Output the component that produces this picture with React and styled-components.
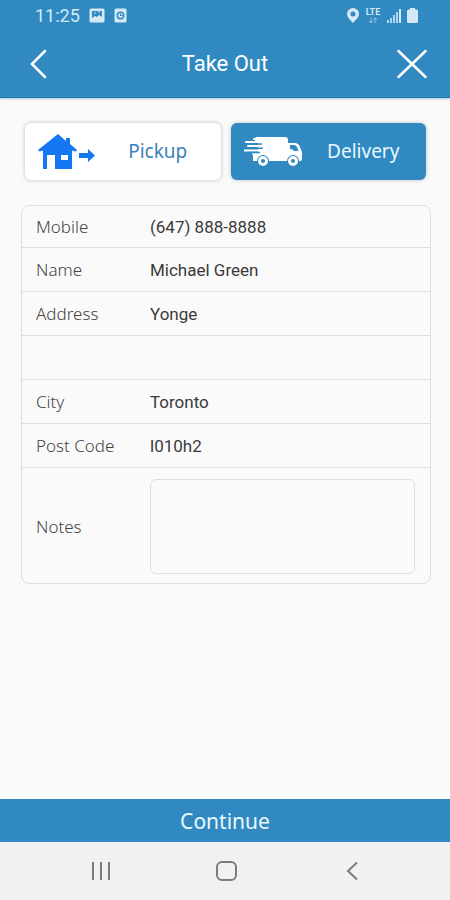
import React from "react";
import styled, { createGlobalStyle } from "styled-components";

const blue = "#308ac1";
const line = "#dedede";
const labelFont = '"Noto Sans", "Open Sans", sans-serif';
const valueFont = 'Roboto, "Liberation Sans", sans-serif';

const GlobalStyle = createGlobalStyle`
  *, *::before, *::after { box-sizing: border-box; }
  body { margin: 0; background: #fafafa; font-family: ${valueFont}; }
  button, input, textarea { font: inherit; color: inherit; margin: 0; }
  svg { display: block; flex: none; }
`;

const Screen = styled.div`
  min-height: 100vh;
  display: flex;
  flex-direction: column;
  background: #fafafa;
`;

const Header = styled.header`
  background: ${blue};
  color: #fff;
  border-bottom: 1px solid #2478aa;
  box-shadow: 0 1px 2px rgba(48, 138, 193, 0.45);
`;

const StatusBar = styled.div`
  height: 31px;
  padding: 0 32px 0 35px;
  display: flex;
  align-items: center;
  justify-content: space-between;
  color: #d3e9f6;
`;

const StatusGroup = styled.div`
  display: flex;
  align-items: center;
  gap: ${(p) => p.$gap}px;
`;

const Clock = styled.time`
  font-size: 18px;
  line-height: 24px;
`;

const TitleBar = styled.div`
  height: 66px;
  padding: 0 20px;
  display: grid;
  grid-template-columns: 36px 1fr 36px;
  align-items: center;
`;

const Title = styled.h1`
  margin: 0;
  text-align: center;
  font-size: 22px;
  line-height: 28px;
  font-weight: 400;
`;

const IconButton = styled.button`
  width: 36px;
  height: 36px;
  padding: 0;
  border: 0;
  background: none;
  display: grid;
  place-items: center;
  cursor: pointer;
`;

const Content = styled.main`
  flex: 1;
  padding: 25px 19px 24px 21px;
`;

const ModeSwitch = styled.div`
  display: grid;
  grid-template-columns: 1fr 1fr;
  gap: 10px;
  padding: 0 5px 0 4px;
`;

const ModeButton = styled.button`
  height: 57px;
  padding: 0 13px;
  border: 0;
  border-radius: 6px;
  display: grid;
  grid-template-columns: 58px 1fr;
  align-items: center;
  text-align: center;
  font-family: ${labelFont};
  font-size: 19px;
  line-height: 24px;
  cursor: pointer;
  background: ${(p) => (p.$active ? blue : "#fff")};
  color: ${(p) => (p.$active ? "#eaf7fd" : "#3b82bd")};
  box-shadow: 0 0 4px rgba(0, 0, 0, 0.24);
`;

const ModeLabel = styled.span`
  padding: 0 0 2px 12px;
`;

const Card = styled.form`
  margin-top: 25px;
  border: 1px solid ${line};
  border-radius: 8px;
`;

const Row = styled.div`
  min-height: 44px;
  display: grid;
  grid-template-columns: 114px 1fr;
  align-items: center;
  padding: 0 15px 0 14px;
  border-bottom: 1px solid ${line};

  &:first-child { min-height: 42px; }
  &:last-child { border-bottom: 0; padding-top: 11px; padding-bottom: 9px; }
`;

const Label = styled.label`
  font-family: ${labelFont};
  font-size: 17px;
  line-height: 24px;
  font-weight: 300;
  color: #444;
`;

const Field = styled.input`
  width: 100%;
  height: 32px;
  padding: 0;
  border: 0;
  outline: 0;
  background: none;
  font-size: 17px;
  color: #3a3a3a;
  grid-column: 2;
`;

const Notes = styled.textarea`
  display: block;
  width: 100%;
  height: 95px;
  padding: 8px;
  border: 1px solid ${line};
  border-radius: 6px;
  outline: 0;
  resize: none;
  background: none;
  font-size: 17px;
`;

const Continue = styled.button`
  height: 43px;
  border: 0;
  padding: 0;
  background: ${blue};
  color: #eaf7fd;
  font-family: ${labelFont};
  font-size: 21px;
  line-height: 28px;
  cursor: pointer;
`;

const SystemNav = styled.nav`
  height: 58px;
  padding: 0 36px 0 38px;
  display: grid;
  grid-template-columns: repeat(3, 1fr);
  place-items: center;
  background: #f1f1f1;
  color: #7c7c7c;
`;

const PictureIcon = () => (
  <svg width="16" height="15" viewBox="0 0 16 15" aria-hidden="true">
    <rect x="0.5" y="0.5" width="15" height="14" rx="1.5" fill="currentColor" />
    <path d="M3 3h10v6l-3-2-2 2-2-1-3 2z" fill={blue} />
    <path d="M5 5h2M9 4h2" stroke="currentColor" strokeWidth="1.200" />
  </svg>
);

const AlarmIcon = () => (
  <svg width="13" height="15" viewBox="0 0 13 15" aria-hidden="true">
    <rect x="0.500" y="0.500" width="12" height="14" rx="1.500" fill="currentColor" />
    <circle cx="6.500" cy="7.500" r="3.200" fill="none" stroke={blue} strokeWidth="1.500" />
    <path d="M6.500 5.500v2h2" fill="none" stroke={blue} strokeWidth="1.200" />
  </svg>
);

const PinIcon = () => (
  <svg width="12" height="15" viewBox="0 0 12 15" aria-hidden="true">
    <path
      d="M6 0a6 6 0 0 0-6 6c0 3.500 3.500 6 6 9 2.500-3 6-5.500 6-9a6 6 0 0 0-6-6zm0 3.500a2.500 2.500 0 1 1 0 5 2.500 2.500 0 0 1 0-5z"
      fill="currentColor"
    />
  </svg>
);

const Lte = styled.span`
  display: flex;
  flex-direction: column;
  align-items: center;
  width: 16px;
  font-size: 9px;
  line-height: 9px;
  font-weight: 700;
`;

const DataArrows = () => (
  <svg width="10" height="7" viewBox="0 0 10 7" aria-hidden="true">
    <path d="M3 .5v5M1 4l2 2 2-2M7 6V1M5.500 2.500 7 1l2 1.500" fill="none" stroke="currentColor" opacity=".6" />
  </svg>
);

const SignalIcon = () => (
  <svg width="14" height="15" viewBox="0 0 14 15" aria-hidden="true">
    <path d="M0 12h2v3H0zM3 10h2v5H3zM6 7h2v8H6zM9 4h2v11H9z" fill="currentColor" opacity=".8" />
    <path d="M12 1h2v14h-2z" fill="currentColor" />
  </svg>
);

const BatteryIcon = () => (
  <svg width="11" height="15" viewBox="0 0 11 15" aria-hidden="true">
    <path d="M3 0h5v1.500h1.500A1.500 1.500 0 0 1 11 3v10.500A1.500 1.500 0 0 1 9.500 15h-8A1.500 1.500 0 0 1 0 13.500V3a1.500 1.500 0 0 1 1.500-1.500H3z" fill="currentColor" />
  </svg>
);

const BackIcon = () => (
  <svg width="36" height="30" viewBox="0 0 36 30" aria-hidden="true">
    <path d="M25 2 12 15l13 13" fill="none" stroke="currentColor" strokeWidth="2.500" strokeLinecap="round" />
  </svg>
);

const CloseIcon = () => (
  <svg width="30" height="30" viewBox="0 0 30 30" aria-hidden="true">
    <path d="m1.500 2 27 26M28.500 2l-27 26" stroke="currentColor" strokeWidth="2.500" strokeLinecap="round" />
  </svg>
);

const HouseIcon = () => (
  <svg width="58" height="37" viewBox="0 0 58 37" aria-hidden="true">
    <path
      fill="#1478f5"
      fillRule="evenodd"
      d="M20 1 0 17l1.500 1.500L5 17.500V36h4V22h8v14h17V17.500l4 1 1-1.500-7-6V5h-4v3zM23 22h7v5h-7z"
    />
    <path fill="#1478f5" d="M41 20h9v-4l7 6.500-7 6.500v-4h-9z" />
  </svg>
);

const TruckIcon = () => (
  <svg width="58" height="31" viewBox="0 0 58 31" aria-hidden="true">
    <path fill="#fff" d="M12 1h29q3 0 3 3v21H9v-8h5V5h-3V3z" />
    <path fill="#fff" d="M43 7h8q3 0 4.500 3l2.500 6v7q0 2-2 2H43z" />
    <path fill={blue} d="M46 9h4q2 0 3 2l1.500 4H50q-1-2-4-2z" />
    <path d="M10 3h9M2 6h17M4 10h15M0 14.500h19M9 18h10" stroke="#fff" strokeWidth="2.200" strokeLinecap="round" />
    <path d="M6 8h12M4 12.200h15M4 16.500h12" stroke={blue} strokeWidth="1.400" />
    <circle cx="19" cy="25" r="6" fill={blue} />
    <circle cx="19" cy="25" r="3.500" fill="none" stroke="#fff" strokeWidth="3" />
    <circle cx="49" cy="25" r="6" fill={blue} />
    <circle cx="49" cy="25" r="3.500" fill="none" stroke="#fff" strokeWidth="3" />
  </svg>
);

const RecentsIcon = () => (
  <svg width="20" height="18" viewBox="0 0 20 18" aria-hidden="true">
    <path d="M2 0v18M10 0v18M18 0v18" stroke="currentColor" strokeWidth="2" />
  </svg>
);

const HomeIcon = () => (
  <svg width="22" height="20" viewBox="0 0 22 20" aria-hidden="true">
    <rect x="2" y="1" width="19" height="18" rx="5" fill="none" stroke="currentColor" strokeWidth="2" />
  </svg>
);

const NavBackIcon = () => (
  <svg width="14" height="20" viewBox="0 0 14 20" aria-hidden="true">
    <path d="M13 1.500 4 10l9 8.500" fill="none" stroke="currentColor" strokeWidth="2" />
  </svg>
);

const fields = [
  { id: "mobile", label: "Mobile", value: "(647) 888-8888" },
  { id: "name", label: "Name", value: "Michael Green" },
  { id: "address", label: "Address", value: "Yonge" },
  { id: "address2", label: "", value: "" },
  { id: "city", label: "City", value: "Toronto" },
  { id: "postcode", label: "Post Code", value: "l010h2" },
];

export default function App() {
  const [mode, setMode] = React.useState("delivery");
  return (
    <Screen>
      <GlobalStyle />
      <Header>
        <StatusBar>
          <StatusGroup $gap={9}>
            <Clock>11:25</Clock>
            <PictureIcon />
            <AlarmIcon />
          </StatusGroup>
          <StatusGroup $gap={6}>
            <PinIcon />
            <Lte>
              LTE
              <DataArrows />
            </Lte>
            <SignalIcon />
            <BatteryIcon />
          </StatusGroup>
        </StatusBar>
        <TitleBar>
          <IconButton type="button" aria-label="Back"><BackIcon /></IconButton>
          <Title>Take Out</Title>
          <IconButton type="button" aria-label="Close"><CloseIcon /></IconButton>
        </TitleBar>
      </Header>
      <Content>
        <ModeSwitch>
          <ModeButton
            type="button"
            $active={mode === "pickup"}
            aria-pressed={mode === "pickup"}
            onClick={() => setMode("pickup")}
          >
            <HouseIcon />
            <ModeLabel>Pickup</ModeLabel>
          </ModeButton>
          <ModeButton
            type="button"
            $active={mode === "delivery"}
            aria-pressed={mode === "delivery"}
            onClick={() => setMode("delivery")}
          >
            <TruckIcon />
            <ModeLabel>Delivery</ModeLabel>
          </ModeButton>
        </ModeSwitch>
        <Card id="details" onSubmit={(e) => e.preventDefault()}>
          {fields.map((f) => (
            <Row key={f.id}>
              {f.label && <Label htmlFor={f.id}>{f.label}</Label>}
              <Field
                id={f.id}
                type="text"
                defaultValue={f.value}
                aria-label={f.label ? undefined : "Address line 2"}
              />
            </Row>
          ))}
          <Row>
            <Label htmlFor="notes">Notes</Label>
            <Notes id="notes" />
          </Row>
        </Card>
      </Content>
      <Continue type="submit" form="details">Continue</Continue>
      <SystemNav aria-label="System">
        <IconButton type="button" aria-label="Recent apps"><RecentsIcon /></IconButton>
        <IconButton type="button" aria-label="Home"><HomeIcon /></IconButton>
        <IconButton type="button" aria-label="System back"><NavBackIcon /></IconButton>
      </SystemNav>
    </Screen>
  );
}
